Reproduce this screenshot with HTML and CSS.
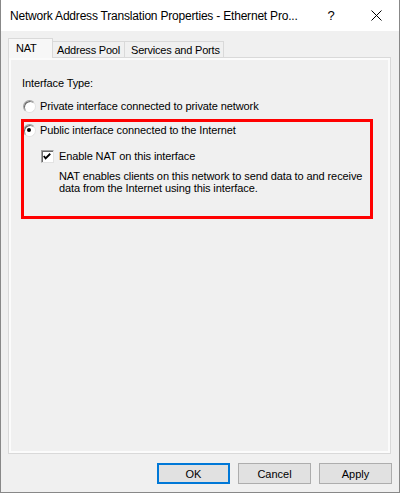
FILE: index.html
```html
<!DOCTYPE html>
<html>
<head>
<meta charset="utf-8">
<link rel="stylesheet" href="styles.css">
</head>
<body>
<div class="window">
  <div class="titlebar">
    <span class="title">Network Address Translation Properties - Ethernet Pro...</span>
    <span class="help">?</span>
    <span class="close"><svg width="11" height="11" viewBox="0 0 11 11"><path d="M0.5 0.5 L10.5 10.5 M10.5 0.5 L0.5 10.5" stroke="#000" stroke-width="1" fill="none"/></svg></span>
  </div>
  <div class="content">
    <div class="tabs">
      <div class="tab selected">NAT</div>
      <div class="tab">Address Pool</div>
      <div class="tab">Services and Ports</div>
    </div>
    <div class="panel">
      <div class="label">Interface Type:</div>
      <div class="row r1"><span class="radio"></span><span>Private interface connected to private network</span></div>
      <div class="row r2"><span class="radio checked"></span><span>Public interface connected to the Internet</span></div>
      <div class="row chk"><span class="checkbox"><svg width="13" height="13" viewBox="0 0 13 13"><path d="M3 6 L5 8.5 L10 3.5" stroke="#000" stroke-width="2" fill="none"/></svg></span><span>Enable NAT on this interface</span></div>
      <div class="desc">NAT enables clients on this network to send data to and receive<br>data from the Internet using this interface.</div>
      <div class="highlight"></div>
    </div>
    <div class="buttons">
      <button class="btn default">OK</button>
      <button class="btn">Cancel</button>
      <button class="btn">Apply</button>
    </div>
  </div>
</div>
</body>
</html>
```
FILE: styles.css
```css
html, body { margin: 0; padding: 0; background: #f0f0f0; }
.window {
  width: 400px; height: 493px; box-sizing: border-box;
  border: 1px solid #888; border-top: none;
  display: flex; flex-direction: column;
  font-family: "Liberation Sans", Arial, sans-serif; font-size: 11px; color: #000;
  letter-spacing: -0.1px;
}
.titlebar {
  height: 31px; background: #fff; display: flex; align-items: center;
  padding-left: 9px; flex: none;
}
.title { font-size: 12px; flex: 1; letter-spacing: -0.2px; }
.help { font-size: 13px; width: 12px; text-align: center; margin-right: 34px; }
.close { width: 11px; height: 11px; margin-right: 17px; display: flex; }
.content {
  flex: 1; background: #f0f0f0; display: flex; flex-direction: column;
  padding: 7px 8px 0 7px;
}
.tabs { display: flex; align-items: flex-end; height: 19px; position: relative; z-index: 1; }
.tab {
  height: 16px; line-height: 16px; box-sizing: border-box; padding: 0 0 0 4px;
  border: 1px solid #d9d9d9; border-bottom: none; border-left: none; background: #f0f0f0;
  white-space: nowrap; font-size: 11px; letter-spacing: -0.2px;
}
.tab.selected {
  height: 20px; line-height: 18px; border-left: 1px solid #d9d9d9; background: #f7f7f7;
  width: 45px; padding: 0 0 0 7px; margin-bottom: -1px;
}
.tab:nth-child(2) { width: 72px; }
.tab:nth-child(3) { width: 99px; padding-left: 6px; }
.panel {
  height: 397px; box-sizing: border-box; border: 1px solid #d9d9d9;
  box-shadow: inset 0 0 0 2px #fbfbfb; background: #f0f0f0;
  padding: 19px 13px 0 13px; position: relative;
}
.label { line-height: 13px; }
.row { display: flex; align-items: center; height: 13px; line-height: 13px; }
.r1 { margin-top: 10px; }
.r2 { margin-top: 11px; }
.chk { margin-top: 13px; margin-left: 19px; }
.radio {
  width: 13px; height: 13px; box-sizing: border-box; border-radius: 50%;
  border: 1px solid; border-color: #a0a0a0 #e3e3e3 #e3e3e3 #a0a0a0;
  background: #fff; margin-left: 1px; margin-right: 4px; position: relative;
  box-shadow: inset 1px 1px 0 #696969;
}
.radio.checked::after {
  content: ""; position: absolute; left: 3px; top: 3px; width: 4px; height: 4px;
  border-radius: 50%; background: #000;
}
.checkbox {
  width: 13px; height: 13px; box-sizing: border-box; background: #fff;
  border: 1px solid; border-color: #a0a0a0 #e3e3e3 #e3e3e3 #a0a0a0;
  box-shadow: inset 1px 1px 0 #696969; margin-right: 5px; display: flex; overflow: hidden;
}
.checkbox svg { margin: -1px 0 0 -1px; }
.desc { margin-top: 7px; margin-left: 37px; line-height: 12px; }
.highlight {
  position: absolute; left: 12px; top: 61px; width: 352px; height: 100px;
  box-sizing: border-box; border: 3px solid #ff0000;
}
.buttons { display: flex; justify-content: flex-end; gap: 8px; margin-top: 9px; margin-right: -1px; }
.btn {
  width: 73px; height: 21px; box-sizing: border-box; background: #e1e1e1;
  border: 1px solid #adadad; font-family: "Liberation Sans", Arial, sans-serif;
  font-size: 11px; color: #000; padding: 0; margin: 0;
}
.btn.default { border: 2px solid #0078d7; }
```
